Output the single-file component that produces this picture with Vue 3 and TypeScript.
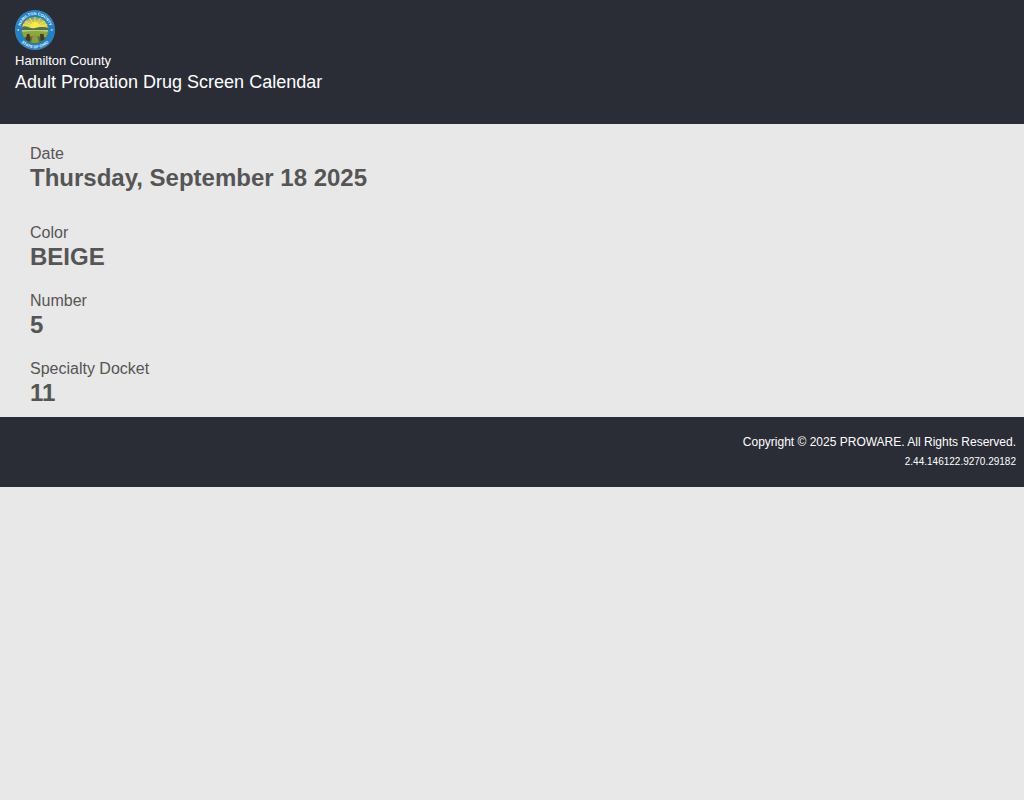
<script setup lang="ts">
interface Entry {
  label: string
  value: string
  spaced?: boolean
}

const entries: Entry[] = [
  { label: 'Date', value: 'Thursday, September 18 2025', spaced: true },
  { label: 'Color', value: 'BEIGE' },
  { label: 'Number', value: '5' },
  { label: 'Specialty Docket', value: '11' },
]
</script>

<template>
  <div class="page">
    <header class="header">
      <svg class="seal" viewBox="0 0 40 40" aria-hidden="true">
        <defs>
          <clipPath id="seal-disc"><circle cx="20" cy="20" r="13.6" /></clipPath>
          <path id="seal-top" d="M5 20a15 15 0 0 1 30 0" />
          <path id="seal-bottom" d="M1.7 20a18.3 18.3 0 0 0 36.6 0" />
          <linearGradient id="seal-sky" x1="0" y1="0" x2="0" y2="1">
            <stop offset="0" stop-color="#4f93a0" />
            <stop offset="0.4" stop-color="#c9c450" />
            <stop offset="1" stop-color="#eedf5c" />
          </linearGradient>
        </defs>
        <circle cx="20" cy="20" r="20" fill="#4a86b0" />
        <circle cx="20" cy="20" r="19.3" fill="#1f80cc" />
        <g clip-path="url(#seal-disc)">
          <rect x="6" y="6" width="28" height="13" fill="url(#seal-sky)" />
          <path
            d="M20 17V6M20 17L14 7M20 17L26 7M20 17L8 10M20 17L32 10M20 17L6 14M20 17L34 14"
            stroke="#f6e94e"
            stroke-width="0.8"
          />
          <circle cx="20" cy="16" r="4" fill="#fbe948" />
          <path d="M6 18q3-3 7-1t7 1t7-1t7 1v3H6z" fill="#49744b" />
          <rect x="6" y="20" width="28" height="2.6" fill="#b9c98a" />
          <path d="M6 22q14-2 28 0v13H6z" fill="#8fa63c" />
          <path d="M6 28q14-4 28 0v8H6z" fill="#4f7a34" />
          <path d="M12 24l2.5 0 1 6-2 2-3-2zM25 24l3.5 0 1 6-4 1z" fill="#4d3526" />
          <path d="M18 25h4l2 8h-8z" fill="#8c9a40" />
        </g>
        <circle cx="20" cy="20" r="13.6" fill="none" stroke="#2f6f78" stroke-width="0.6" />
        <g class="seal-text">
          <text><textPath href="#seal-top" startOffset="50%">HAMILTON COUNTY</textPath></text>
          <text><textPath href="#seal-bottom" startOffset="50%">STATE OF OHIO</textPath></text>
        </g>
        <path d="M2.2 20h2M35.8 20h2M3.2 19v2M36.8 19v2" stroke="#d9edf5" stroke-width="0.7" />
      </svg>
      <div class="county">Hamilton County</div>
      <h1 class="title">Adult Probation Drug Screen Calendar</h1>
    </header>

    <main class="content">
      <dl class="entries">
        <div v-for="entry in entries" :key="entry.label" class="entry" :class="{ spaced: entry.spaced }">
          <dt class="label">{{ entry.label }}</dt>
          <dd class="value">{{ entry.value }}</dd>
        </div>
      </dl>
    </main>

    <footer class="footer">
      <div class="copyright">Copyright © 2025 PROWARE. All Rights Reserved.</div>
      <div class="version">2.44.146122.9270.29182</div>
    </footer>
  </div>
</template>

<style>
body {
  margin: 0;
  background: #e8e8e8;
}
</style>

<style scoped>
.page {
  font-family: "Liberation Sans", Arial, Helvetica, sans-serif;
  color: #555;
}
.header {
  padding: 10px 15px 32px;
  background: #2a2d35;
  color: #fff;
}
.seal {
  display: block;
  width: 40px;
  height: 40px;
}
.seal-text {
  font-size: 4px;
  font-weight: 700;
  fill: #eef8fb;
  text-anchor: middle;
}
.county {
  font-size: 13px;
  line-height: 22px;
}
.title {
  margin: 0;
  font-size: 18px;
  line-height: 20px;
  font-weight: 400;
}
.content {
  padding: 20px 30px 10px;
}
.entries {
  display: flex;
  flex-direction: column;
  gap: 20px;
  margin: 0;
}
.entry.spaced {
  padding-bottom: 11px;
}
.label {
  font-size: 16px;
  line-height: 20px;
}
.value {
  margin: 0;
  font-size: 24px;
  line-height: 28px;
  font-weight: 700;
}
.footer {
  padding: 15px 8px;
  background: #2a2d35;
  color: #fff;
  text-align: right;
  line-height: 20px;
}
.copyright {
  font-size: 12px;
}
.version {
  font-size: 10px;
}
</style>
